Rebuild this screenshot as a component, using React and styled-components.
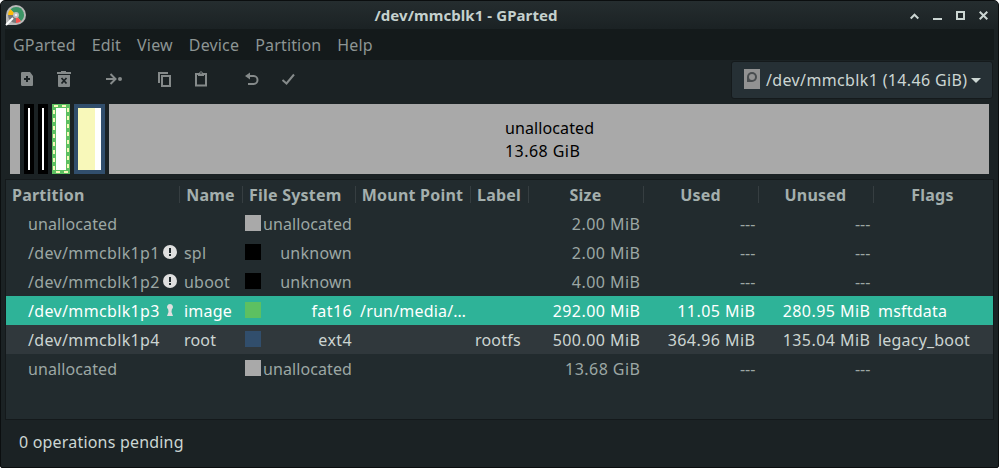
import React from "react";
import styled, { createGlobalStyle } from "styled-components";

const Global = createGlobalStyle`
  * { box-sizing: border-box; }
  body { margin: 0; background: #fff; font-family: "Noto Sans", sans-serif; font-size: 16px; }
`;

const Window = styled.div`
  width: 999px;
  height: 468px;
  display: flex;
  flex-direction: column;
  background: #1b2224;
  border: 1px solid #0b0e0f;
  border-radius: 5px 5px 2px 2px;
  overflow: hidden;
  white-space: nowrap;
`;

const TitleBar = styled.header`
  height: 28px;
  flex: none;
  display: grid;
  grid-template-columns: 93px 1fr 93px;
  background: linear-gradient(#252d2f, #1b2224);
`;

const AppIcon = styled.svg`
  margin: 4px 0 0 4px;
`;

const Title = styled.h1`
  margin: 0;
  text-align: center;
  font-size: 15px;
  line-height: 28px;
  font-weight: 700;
  letter-spacing: 0.08px;
  color: #c5d1ce;
  padding: 0 67px 0 0;
`;

const Controls = styled.div`
  display: flex;
  gap: 14px;
  padding: 10px 0 0 5px;
`;

const MenuBar = styled.nav`
  height: 31px;
  flex: none;
  margin: 0 4px;
  display: flex;
  background: #141a1b;
`;

const MenuItem = styled.span`
  padding: 0 8px;
  line-height: 32px;
  letter-spacing: 0.17px;
  color: #8d9594;
`;

const ToolBar = styled.div`
  height: 44px;
  flex: none;
  display: flex;
  align-items: flex-start;
  padding: 1px 5px 0 18px;
`;

const ToolButton = styled.svg`
  flex: none;
  margin: 10px 20px 0 0;
  color: #858a8a;
`;

const ToolGap = styled.span`
  width: 13px;
  flex: none;
`;

const DeviceSelect = styled.div`
  width: 262px;
  height: 38px;
  margin-left: auto;
  display: flex;
  border: 1px solid #151a1c;
  border-radius: 3px;
  background: #263035;
  color: #ccd6d3;
  line-height: 36px;
  letter-spacing: 0.36px;
  padding-left: 12px;
`;

const DriveIcon = styled.svg`
  flex: none;
  margin: 7px 6px 0 0;
`;

const Caret = styled.svg`
  flex: none;
  margin: 16px 0 0 4px;
`;

const DiskMap = styled.div`
  height: 70px;
  flex: none;
  margin: 0 9px;
  display: flex;
  gap: 4px;
`;

const Segment = styled.div`
  position: relative;
  width: ${(p) => p.$width}px;
  border: 4px solid ${(p) => p.$color};
  background: ${(p) => p.$fill || "#fff"};
  color: #000;
  line-height: 23px;
`;

const UsedSpace = styled.div`
  width: ${(p) => p.$width}px;
  height: 100%;
  background: #f8f8ba;
`;

const Dashes = styled.svg`
  position: absolute;
  left: -4px;
  top: -4px;
`;

const SegmentLabel = styled.div`
  padding: ${(p) => (p.$first ? "9px" : "0")} 0 0 392px;
  letter-spacing: ${(p) => p.$track}px;
`;

const List = styled.div`
  height: 241px;
  flex: none;
  margin: 5px 4px 0;
  border: 1px solid #14191b;
  background: #222b2e;
`;

const columns = "174px 63px 113px 115px 58px 115px 115px 115px 119px";

const HeaderRow = styled.div`
  display: grid;
  grid-template-columns: ${columns};
  height: 29px;
  align-items: center;
  color: #a4afad;
  font-weight: 700;
  letter-spacing: 0.22px;
`;

const HeaderCell = styled.div`
  height: 17px;
  line-height: 18px;
  padding: ${(p) => (p.$align ? "0 0 0 6px" : "0 6px 0 5px")};
  text-align: ${(p) => p.$align || "center"};
  border-right: 1px solid ${(p) => (p.$last ? "transparent" : "#363e41")};
`;

const Row = styled.div`
  display: grid;
  grid-template-columns: ${columns};
  height: 29px;
  line-height: 31px;
  color: ${(p) => (p.$state === "selected" ? "#fff" : p.$state === "hover" ? "#ccd5d2" : "#9ca7a4")};
  background: ${(p) => (p.$state === "selected" ? "#2eb398" : p.$state === "hover" ? "#30383c" : "transparent")};
`;

const Cell = styled.div`
  height: 29px;
  padding: 0 4px;
  letter-spacing: ${(p) => p.$track ?? 0.2}px;
`;

const SizeCell = styled(Cell)`
  padding-right: 3.6px;
  text-align: right;
`;

const NameCell = styled(Cell)`
  display: flex;
  justify-content: space-between;
  padding: 0 3px 0 22px;
`;

const StatusIcon = styled.svg`
  margin-top: 7px;
`;

const FsCell = styled(Cell)`
  display: flex;
  justify-content: space-between;
  padding-left: 2px;
`;

const Swatch = styled.span`
  width: 16px;
  height: 16px;
  margin-top: 6px;
  background: ${(p) => p.$color};
`;

const StatusBar = styled.footer`
  padding: 0 18px;
  line-height: 45px;
  letter-spacing: 0.19px;
  color: #ccd6d3;
`;

const menus = ["GParted", "Edit", "View", "Device", "Partition", "Help"];

const Tool = ({ children }) => (
  <ToolButton width="17" height="17" viewBox="0 0 17 17" fill="none" stroke="currentColor">
    {children}
  </ToolButton>
);

const tracking = { unallocated: 0.1, unknown: 0.25, fat16: 0.4, ext4: 0.4 };

const partitions = [
  { path: "unallocated", fs: "unallocated", color: "#a9a9a9", size: "2.00 MiB", used: "---", unused: "---" },
  { path: "/dev/mmcblk1p1", icon: "warn", name: "spl", fs: "unknown", color: "#000", size: "2.00 MiB", used: "---", unused: "---" },
  { path: "/dev/mmcblk1p2", icon: "warn", name: "uboot", fs: "unknown", color: "#000", size: "4.00 MiB", used: "---", unused: "---" },
  { path: "/dev/mmcblk1p3", icon: "key", name: "image", fs: "fat16", color: "#5dc061", mount: "/run/media/…", size: "292.00 MiB", used: "11.05 MiB", unused: "280.95 MiB", flags: "msftdata", state: "selected" },
  { path: "/dev/mmcblk1p4", name: "root", fs: "ext4", color: "#314e6c", label: "rootfs", size: "500.00 MiB", used: "364.96 MiB", unused: "135.04 MiB", flags: "legacy_boot", state: "hover" },
  { path: "unallocated", fs: "unallocated", color: "#a9a9a9", size: "13.68 GiB", used: "---", unused: "---" },
];

const Amount = ({ children }) => (
  <SizeCell $track={children === "---" ? 0 : 0.45}>{children}</SizeCell>
);

const PartitionIcon = ({ kind }) => (
  <StatusIcon width="14" height="14" viewBox="0 0 14 14">
    {kind === "warn" ? (
      <>
        <circle cx="7" cy="7" r="7" fill="#dfdfdf" />
        <path d="M6 3h2v5H6zM6 9h2v2H6z" fill="#222b2e" />
      </>
    ) : (
      <path d="M7 1a3 3 0 0 0-1.800 5.400L5.500 9 4 13h6L8.500 9l.3-2.600A3 3 0 0 0 7 1z" fill="#dfdfdf" />
    )}
  </StatusIcon>
);

export default function App() {
  return (
    <>
      <Global />
      <Window>
        <TitleBar>
          <AppIcon width="22" height="21" viewBox="0 0 22 21">
            <path d="M1 20V10A10 10 0 1 1 11 20z" fill="#b9b9b9" />
            <path d="M11 10V2A8 8 0 0 1 16 16.200z" fill="#3c9466" />
            <path d="M11 10V2A8 8 0 0 0 5.500 4.200z" fill="#3c9466" />
            <path d="M11 10 5.500 4.200A8 8 0 0 0 3 10z" fill="#fdbc07" />
            <path d="M11 10H3a8 8 0 0 0 8 8z" fill="#777" />
            <path d="M11 10v8a8 8 0 0 0 5-1.800z" fill="#f9524e" />
            <circle cx="11" cy="10" r="3" fill="#bdbdbd" />
            <circle cx="11" cy="10" r="1.300" fill="#eee" />
            <path d="M1 20 8 13" stroke="#fff" strokeWidth="2" />
          </AppIcon>
          <Title>/dev/mmcblk1 - GParted</Title>
          <Controls>
            <svg width="9" height="10" fill="none" stroke="#cbd5d2" strokeWidth="2"><path d="M.7 7.500 4.500 3.700 8.300 7.500" /></svg>
            <svg width="9" height="10"><path d="M0 7h9v2H0z" fill="#cbd5d2" /></svg>
            <svg width="9" height="10" fill="none" stroke="#cbd5d2" strokeWidth="2"><path d="M1 1h7v7H1z" /></svg>
            <svg width="9" height="10" fill="none" stroke="#cbd5d2" strokeWidth="2"><path d="m.7.7 7.600 7.600M8.300.7.7 8.300" /></svg>
          </Controls>
        </TitleBar>
        <MenuBar>
          {menus.map((m) => <MenuItem key={m}>{m}</MenuItem>)}
        </MenuBar>
        <ToolBar>
          <Tool><path d="M3.500 1H11l3 4v9q0 1-1 1H3.500q-1.500 0-1.500-1.500V2q0-1 1.500-1z" fill="currentColor" stroke="none" /><path d="M5 8h6M8 5v6" stroke="#1b2224" strokeWidth="2" /></Tool>
          <Tool><path d="M1 1h4V0h5v1h5v2H1zM2 4h12v11q0 1-1 1H3q-1 0-1-1z" fill="currentColor" stroke="none" /><path d="m5.500 7 5 5.500m0-5.500-5 5.500" stroke="#1b2224" strokeWidth="1.800" /></Tool>
          <ToolGap />
          <Tool><path d="M0 8h9M4.500 3 9.500 8l-5 5" strokeWidth="2" /><circle cx="14" cy="8" r="2" fill="currentColor" stroke="none" /></Tool>
          <ToolGap />
          <Tool><path d="M6 5h8v10H6z" strokeWidth="2" /><path d="M3 12V2h9" strokeWidth="2" /></Tool>
          <Tool><path d="M3 3h10v11.500H3z" strokeWidth="2" /><path d="M5 2h1q2-3.500 4 0h1v3H5z" fill="currentColor" stroke="none" /><circle cx="8" cy="2" r=".8" fill="#1b2224" stroke="none" /></Tool>
          <ToolGap />
          <Tool><path d="M5 5h5.500a3.700 3.700 0 0 1 0 8H5" strokeWidth="2" /><path d="M2 5 7 1.500v7z" fill="currentColor" stroke="none" /></Tool>
          <Tool><path d="M2.500 9 6.500 12.500 14 3.500" strokeWidth="2" /></Tool>
          <DeviceSelect>
            <DriveIcon width="16" height="20">
              <path d="M0 0h16v20H0z" fill="#929292" />
              <path d="M3 13V8a5 5 0 1 1 5 5z" fill="#494d4f" />
              <circle cx="8" cy="8" r="3" fill="#929292" />
            </DriveIcon>
            /dev/mmcblk1 (14.46 GiB)
            <Caret width="10" height="5"><path d="M0 0h10L5 5z" fill="#ccd6d3" /></Caret>
          </DeviceSelect>
        </ToolBar>
        <DiskMap>
          <Segment $width={10} $color="#a9a9a9" $fill="#a9a9a9" />
          <Segment $width={10} $color="#000" />
          <Segment $width={10} $color="#000" />
          <Segment $width={18} $color="#5dc061">
            <Dashes width="18" height="70" fill="none" stroke="#f8f8ba" strokeWidth="2" strokeDasharray="4 4">
              <path d="M2 2h14v66H2z" />
            </Dashes>
          </Segment>
          <Segment $width={31} $color="#314e6c"><UsedSpace $width={17} /></Segment>
          <Segment $width={880} $color="#a9a9a9" $fill="#a9a9a9">
            <SegmentLabel $first $track={0.1}>unallocated</SegmentLabel>
            <SegmentLabel $track={0.45}>13.68 GiB</SegmentLabel>
          </Segment>
        </DiskMap>
        <List>
          <HeaderRow>
            <HeaderCell $align="left">Partition</HeaderCell>
            <HeaderCell>Name</HeaderCell>
            <HeaderCell $align="left">File System</HeaderCell>
            <HeaderCell>Mount Point</HeaderCell>
            <HeaderCell>Label</HeaderCell>
            <HeaderCell>Size</HeaderCell>
            <HeaderCell>Used</HeaderCell>
            <HeaderCell>Unused</HeaderCell>
            <HeaderCell $last>Flags</HeaderCell>
          </HeaderRow>
          {partitions.map((p, i) => (
            <Row key={i} $state={p.state}>
              <NameCell $track={p.path === "unallocated" ? 0.1 : 0.35}>{p.path}{p.icon && <PartitionIcon kind={p.icon} />}</NameCell>
              <Cell>{p.name}</Cell>
              <FsCell $track={tracking[p.fs]}><Swatch $color={p.color} />{p.fs}</FsCell>
              <Cell>{p.mount}</Cell>
              <Cell>{p.label}</Cell>
              <Amount>{p.size}</Amount>
              <Amount>{p.used}</Amount>
              <Amount>{p.unused}</Amount>
              <Cell>{p.flags}</Cell>
            </Row>
          ))}
        </List>
        <StatusBar>0 operations pending</StatusBar>
      </Window>
    </>
  );
}
